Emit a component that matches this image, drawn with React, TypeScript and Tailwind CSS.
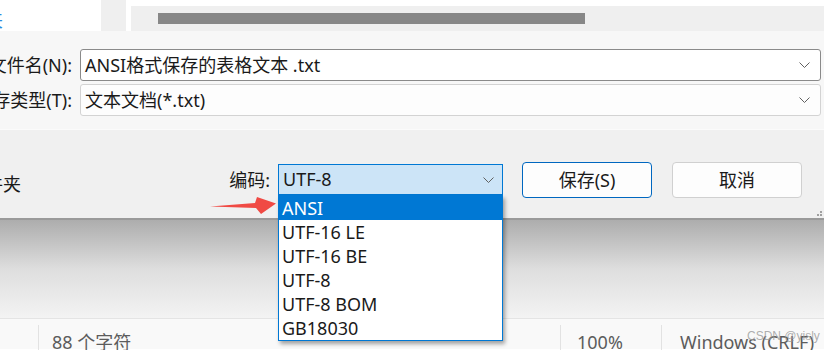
import React from "react";

const Chevron = ({ className = "" }: { className?: string }) => (
  <svg width="11" height="6" viewBox="0 0 11 6" className={className}>
    <path d="M0.5 0.5 L5.5 5.5 L10.5 0.5" fill="none" stroke="#606060" strokeWidth="1" />
  </svg>
);

const items = ["ANSI", "UTF-16 LE", "UTF-16 BE", "UTF-8", "UTF-8 BOM", "GB18030"];

export default function App() {
  return (
    <div className="relative w-[824px] h-[350px] overflow-hidden bg-white font-['Noto_Sans','Noto_Sans_CJK_SC',sans-serif] text-[#1a1a1a]">
      {/* top strip */}
      <div className="flex h-[31px]">
        <div className="w-[101px] bg-white flex">
          <div className="w-[3px] overflow-hidden flex justify-end items-end pb-[1px]">
            <span className="text-[18px] leading-[20px] text-[#2b8ae0] whitespace-nowrap">夹</span>
          </div>
        </div>
        <div className="w-[25px] bg-[#efefef]" />
        <div className="w-[5px] bg-white" />
        <div className="flex-1 flex flex-col">
          <div className="h-[6px] bg-white" />
          <div className="flex-1 bg-[#efefef] pl-[27px] pt-[7px]">
            <div className="w-[427px] h-[11px] bg-[#878787]" />
          </div>
        </div>
      </div>

      {/* dialog upper */}
      <div className="h-[98px] bg-[#f7f7f7] pt-[18px] flex flex-col gap-[3px]">
        <div className="flex h-[32px] items-center">
          <div className="w-[80px] overflow-hidden flex justify-end pr-[8px]">
            <span className="text-[18px] whitespace-nowrap">文件名(N):</span>
          </div>
          <div className="w-[741px] h-[32px] bg-white border border-[#8a8a8a] rounded-[3px] flex items-center pl-[4px] pr-[10px]">
            <span className="flex-1 text-[18px] whitespace-nowrap">ANSI格式保存的表格文本 .txt</span>
            <Chevron />
          </div>
        </div>
        <div className="flex h-[32px] items-center">
          <div className="w-[80px] overflow-hidden flex justify-end pr-[8px]">
            <span className="text-[18px] whitespace-nowrap">保存类型(T):</span>
          </div>
          <div className="w-[741px] h-[32px] bg-[#fdfdfd] border border-[#d3d3d3] rounded-[3px] flex items-center pl-[4px] pr-[10px]">
            <span className="flex-1 text-[18px] whitespace-nowrap">文本文档(*.txt)</span>
            <Chevron />
          </div>
        </div>
      </div>
      <div className="h-[1px] bg-[#fbfbfb]" />

      {/* dialog lower */}
      <div className="relative h-[88px] bg-[#f0f0f0] pt-[32px] flex items-center">
        <div className="w-[278px] flex items-center self-start h-[36px]">
          <div className="w-[21px] overflow-hidden flex justify-end mt-[8px]">
            <span className="text-[18px] whitespace-nowrap">件夹</span>
          </div>
          <div className="flex-1 flex justify-end pr-[8px]">
            <span className="text-[18px] whitespace-nowrap">编码:</span>
          </div>
        </div>
        <div className="w-[225px] h-[31px] bg-[#cce4f7] border border-[#0078d4] flex items-center pl-[4px] pr-[8px] self-start mt-[2px]">
          <span className="flex-1 text-[18px]">UTF-8</span>
          <Chevron />
        </div>
        <button className="ml-[19px] w-[130px] h-[36px] self-start bg-[#fdfdfd] border border-[#0067c0] rounded-[4px] text-[18px]">
          保存(S)
        </button>
        <button className="ml-[20px] w-[130px] h-[36px] self-start bg-[#fdfdfd] border border-[#d0d0d0] rounded-[4px] text-[18px]">
          取消
        </button>
        <div className="absolute right-[2px] bottom-[2px] grid grid-cols-3 gap-[1px]">
          <div className="w-[2px] h-[2px]" />
          <div className="w-[2px] h-[2px]" />
          <div className="w-[2px] h-[2px] bg-[#a0a0a0]" />
          <div className="w-[2px] h-[2px]" />
          <div className="w-[2px] h-[2px] bg-[#a0a0a0]" />
          <div className="w-[2px] h-[2px] bg-[#a0a0a0]" />
        </div>
      </div>

      {/* shadow area */}
      <div className="h-[100px] border-t-[2px] border-[#9a9a9a] bg-linear-to-b from-[#adadad] via-[#dedede] to-[#f3f3f3]" />

      {/* status bar */}
      <div className="relative h-[31px] bg-[#f9f9f9] border-t border-[#e4e4e4] flex items-start text-[18px] text-[#5c5c5c]">
        <div className="w-[38px] h-full" />
        <div className="w-[1px] h-[25px] mt-[6px] bg-[#e2e2e2]" />
        <div className="w-[521px] pl-[13px] pt-[10px] whitespace-nowrap">88 个字符</div>
        <div className="w-[1px] h-[25px] mt-[6px] bg-[#e2e2e2]" />
        <div className="w-[100px] pl-[16px] pt-[10px] whitespace-nowrap">100%</div>
        <div className="w-[1px] h-[25px] mt-[6px] bg-[#e2e2e2]" />
        <div className="flex-1 pl-[18px] pt-[10px] whitespace-nowrap">Windows (CRLF)</div>
        <div className="absolute left-[747px] top-[10px] text-[12px] leading-[14px] text-[#9a9a9a]/80 font-['Liberation_Sans',sans-serif]">
          CSDN @yisly
        </div>
      </div>

      {/* dropdown list overlay */}
      <div className="absolute left-[278px] top-[195px] w-[225px] bg-white border border-[#0078d4] shadow-[2px_3px_4px_rgba(0,0,0,0.35)]">
        {items.map((t, i) => (
          <div
            key={t}
            className={
              i === 0
                ? "h-[24px] pl-[3px] flex items-center text-[18px] bg-[#0078d4] text-white"
                : "h-[24px] pl-[3px] flex items-center text-[18px] text-[#1a1a1a]"
            }
          >
            {t}
          </div>
        ))}
      </div>

      {/* red arrow annotation */}
      <svg className="absolute left-[205px] top-[193px]" width="75" height="26" viewBox="0 0 75 26">
        <path d="M5 13.5 L50 10 L52 4 L71 10.5 L56 21 L51 15 Z" fill="#f04a44" />
      </svg>
    </div>
  );
}
